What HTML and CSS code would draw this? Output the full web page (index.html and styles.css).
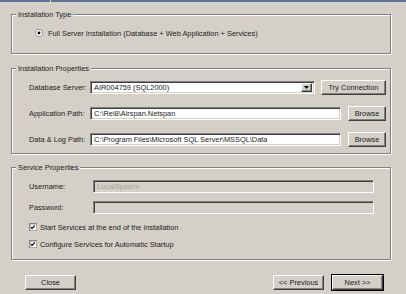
FILE: index.html
```html
<!DOCTYPE html>
<html lang="en">
<head>
    <meta charset="UTF-8">
    <title>Setup - Installation Properties</title>
    <link rel="stylesheet" href="styles.css">
</head>
<body>
    <div class="titlebar"><span class="tab"></span></div>

    <div class="dialog">
        <fieldset class="group group-type">
            <legend>Installation Type</legend>
            <div class="group-body">
                <div class="option">
                    <svg class="radio" width="8" height="8" viewBox="0 0 12 12">
                        <circle cx="6" cy="6" r="5.4" fill="#fff" stroke="#808080" stroke-width="1.2"/>
                        <circle cx="6" cy="6" r="2.2" fill="#000"/>
                    </svg>
                    <span>Full Server Installation (Database + Web Application + Services)</span>
                </div>
            </div>
        </fieldset>

        <fieldset class="group group-install">
            <legend>Installation Properties</legend>
            <div class="group-body">
                <div class="row">
                    <span class="label">Database Server:</span>
                    <div class="field combo">
                        <span class="value">AIR004759 (SQL2000)</span>
                        <span class="drop">
                            <svg width="5" height="3" viewBox="0 0 5 3"><polygon points="0,0 5,0 2.5,3" fill="#000"/></svg>
                        </span>
                    </div>
                    <button class="btn btn-try">Try Connection</button>
                </div>
                <div class="row">
                    <span class="label">Application Path:</span>
                    <input class="field path" type="text" value="C:\Rel8\Airspan.Netspan" readonly>
                    <button class="btn btn-browse">Browse</button>
                </div>
                <div class="row">
                    <span class="label">Data &amp; Log Path:</span>
                    <input class="field path" type="text" value="C:\Program Files\Microsoft SQL Server\MSSQL\Data" readonly>
                    <button class="btn btn-browse">Browse</button>
                </div>
            </div>
        </fieldset>

        <fieldset class="group group-service">
            <legend>Service Properties</legend>
            <div class="group-body">
                <div class="row-plain">
                    <span class="label label-wide">Username:</span>
                    <input class="field disabled" type="text" value="LocalSystem" disabled>
                </div>
                <div class="row-plain">
                    <span class="label label-wide">Password:</span>
                    <input class="field disabled" type="password" value="" disabled>
                </div>
                <div class="check first">
                    <svg class="box" width="8" height="8" viewBox="0 0 13 13">
                        <rect x="0.5" y="0.5" width="12" height="12" fill="#fff" stroke="#808080"/>
                        <path d="M1.5 1.5 H11.5 M1.5 1.5 V11.5" stroke="#404040" fill="none"/>
                        <path d="M3 5.5 L5 7.5 L9.5 3 L9.5 5.5 L5 10 L3 8 Z" fill="#000"/>
                    </svg>
                    <span>Start Services at the end of the installation</span>
                </div>
                <div class="check">
                    <svg class="box" width="8" height="8" viewBox="0 0 13 13">
                        <rect x="0.5" y="0.5" width="12" height="12" fill="#fff" stroke="#808080"/>
                        <path d="M1.5 1.5 H11.5 M1.5 1.5 V11.5" stroke="#404040" fill="none"/>
                        <path d="M3 5.5 L5 7.5 L9.5 3 L9.5 5.5 L5 10 L3 8 Z" fill="#000"/>
                    </svg>
                    <span>Configure Services for Automatic Startup</span>
                </div>
            </div>
        </fieldset>

        <div class="actions">
            <button class="btn btn-nav">Close</button>
            <div class="nav-pair">
                <button class="btn btn-nav">&lt;&lt; Previous</button>
                <button class="btn btn-nav btn-default">Next &gt;&gt;</button>
            </div>
        </div>
    </div>
</body>
</html>
```

FILE: styles.css
```css
* {
    box-sizing: border-box;
}
body {
    margin: 0;
    width: 406px;
    height: 294px;
    overflow: hidden;
    background: #d4d0c8;
    font-family: "Liberation Sans", Arial, sans-serif;
    font-size: 7.4px;
    color: #1a1a1a;
}
.titlebar {
    height: 2px;
    background: #5b7299;
}
.titlebar .tab {
    display: block;
    width: 51px;
    height: 2px;
    border-right: 1px solid #c9d2e0;
}
.dialog {
    width: 380px;
    margin: 8px 0 0 11px;
}
.group {
    margin: 0;
    padding: 0;
    min-width: 0;
    border: 1px solid #808080;
    box-shadow: inset 1px 1px #fff, 1px 1px #fff;
}
.group legend {
    margin-left: 4px;
    padding: 0 2px;
    height: 9px;
    line-height: 9px;
    background: #d4d0c8;
}
.group-type {
    height: 44px;
}
.group-install {
    height: 90px;
    margin-top: 10px;
}
.group-service {
    height: 97px;
    margin-top: 9px;
}
.group-type .group-body {
    padding: 9px 0 0 23px;
}
.group-install .group-body {
    padding: 7px 4px 0 17px;
}
.group-service .group-body {
    padding: 8px 4px 0 17px;
}
.option {
    display: flex;
    align-items: center;
    height: 10px;
    gap: 5px;
}
.radio {
    display: block;
}
.row {
    display: flex;
    align-items: center;
    height: 15px;
    margin-bottom: 11px;
}
.row-plain {
    display: flex;
    align-items: center;
    height: 13px;
    margin-bottom: 8px;
}
.label {
    width: 61px;
    flex: none;
}
.label-wide {
    width: 64px;
}
.field {
    height: 13px;
    margin: 0;
    padding: 0 3px;
    font: inherit;
    color: #1a1a1a;
    background: #fff;
    border: 1px solid;
    border-color: #808080 #fff #fff #808080;
    box-shadow: inset 1px 1px #404040, inset -1px -1px #d4d0c8;
    outline: none;
}
.combo {
    width: 225px;
    display: flex;
    align-items: center;
    justify-content: space-between;
    padding: 2px 2px 2px 3px;
    margin-right: 6px;
}
.combo .drop {
    width: 11px;
    height: 9px;
    display: flex;
    align-items: center;
    justify-content: center;
    background: #d4d0c8;
    border: 1px solid;
    border-color: #fff #404040 #404040 #fff;
    box-shadow: inset -1px -1px #808080;
}
.combo .drop svg {
    display: block;
}
.path {
    width: 251px;
    margin-right: 7px;
}
.disabled {
    width: 281px;
    background: #d4d0c8;
    color: #a6a29a;
}
.btn {
    height: 15px;
    margin: 0;
    padding: 0;
    font: inherit;
    color: #1a1a1a;
    background: #d4d0c8;
    border: 1px solid;
    border-color: #fff #404040 #404040 #fff;
    box-shadow: inset -1px -1px #808080;
}
.btn-try {
    width: 65px;
}
.btn-browse {
    width: 38px;
}
.check {
    display: flex;
    align-items: center;
    gap: 3px;
    height: 10px;
    margin-top: 7px;
}
.check.first {
    margin-top: 5px;
}
.check .box {
    display: block;
}
.actions {
    display: flex;
    justify-content: space-between;
    margin-top: 15px;
    padding: 0 8px 0 14px;
}
.nav-pair {
    display: flex;
    gap: 8px;
}
.btn-nav {
    width: 51px;
}
.btn-default {
    box-shadow: inset -1px -1px #808080, 0 0 0 1px #000;
}
```
